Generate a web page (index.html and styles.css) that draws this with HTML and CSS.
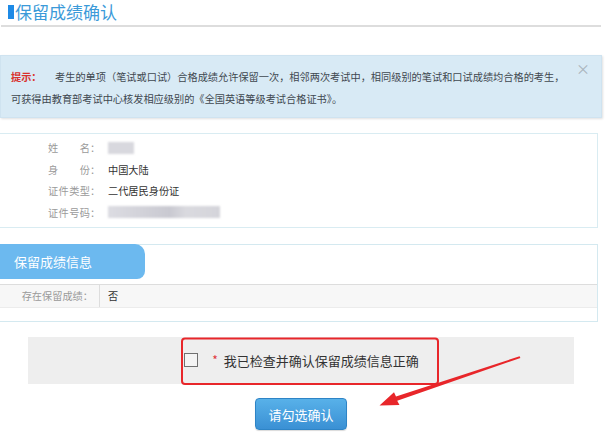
FILE: index.html
```html
<!DOCTYPE html>
<html lang="zh-CN">
<head>
<meta charset="utf-8">
<title>保留成绩确认</title>
<link rel="stylesheet" href="styles.css">
</head>
<body>
<div class="page">
  <div class="header">
    <span class="header-bar"></span>
    <h1 class="header-title">保留成绩确认</h1>
  </div>

  <div class="alert">
    <span class="alert-close">×</span>
    <div class="alert-line"><span class="alert-tag">提示：</span>考生的单项（笔试或口试）合格成绩允许保留一次，相邻两次考试中，相同级别的笔试和口试成绩均合格的考生，</div>
    <div class="alert-line">可获得由教育部考试中心核发相应级别的《全国英语等级考试合格证书》。</div>
  </div>

  <div class="info-box">
    <div class="info-row">
      <span class="info-label"><span class="justify">姓名</span>：</span>
      <span class="blur blur-name"></span>
    </div>
    <div class="info-row">
      <span class="info-label"><span class="justify">身份</span>：</span>
      <span class="info-value">中国大陆</span>
    </div>
    <div class="info-row">
      <span class="info-label"><span class="justify">证件类型</span>：</span>
      <span class="info-value">二代居民身份证</span>
    </div>
    <div class="info-row">
      <span class="info-label"><span class="justify">证件号码</span>：</span>
      <span class="blur blur-id"></span>
    </div>
  </div>

  <div class="score-box">
    <div class="score-tab">保留成绩信息</div>
    <div class="score-row">
      <div class="score-label">存在保留成绩：</div>
      <div class="score-value">否</div>
    </div>
  </div>

  <div class="confirm-bar">
    <label class="confirm-label">
      <span class="checkbox"></span>
      <span class="star">*</span>
      <span class="confirm-text">我已检查并确认保留成绩信息正确</span>
    </label>
  </div>

  <div class="btn-wrap">
    <button class="btn">请勾选确认</button>
  </div>

  <svg class="annotation" width="606" height="440" viewBox="0 0 606 440">
    <rect x="182" y="338.5" width="256" height="45.5" rx="3" ry="3" fill="none" stroke="#e8262a" stroke-width="2"/>
    <polygon points="519.6,356.3 396,396.4 394,392.2 379.5,405.5 399.5,405 397.2,400.8 520.4,357.9" fill="#e8262a"/>
  </svg>
</div>
</body>
</html>
```

FILE: styles.css
```css
* { box-sizing: border-box; }

html, body {
  margin: 0;
  padding: 0;
  background: #ffffff;
}

body {
  font-family: "Noto Sans CJK SC", "Noto Sans", sans-serif;
  color: #333333;
}

.page {
  position: relative;
  width: 606px;
  height: 440px;
  overflow: hidden;
}

/* header */
.header {
  display: flex;
  align-items: center;
  height: 27px;
  width: 600px;
  margin-left: 1px;
  padding-left: 7px;
  padding-bottom: 1px;
  border-bottom: 2px solid #dddddd;
}

.header-bar {
  width: 6px;
  height: 14px;
  background: #1e8ae6;
  margin-right: 1px;
}

.header-title {
  margin: 0;
  font-size: 17px;
  font-weight: normal;
  line-height: 20px;
  color: #3b9ad9;
}

/* alert */
.alert {
  position: relative;
  margin-top: 28px;
  width: 602px;
  height: 63px;
  padding: 10px 10px 0 10px;
  background: #d8eaf5;
  border: 1px solid #cfe3f0;
  box-shadow: 1px 1px 2px rgba(0, 0, 0, 0.12);
  font-size: 10.2px;
  color: #3f4850;
}

.alert-line {
  white-space: nowrap;
  line-height: 21.5px;
}

.alert-tag {
  color: #d9302c;
  font-weight: bold;
  margin-right: 13.5px;
}

.alert-close {
  position: absolute;
  top: 5px;
  right: 11px;
  font-size: 14px;
  line-height: 14px;
  color: #a9b4bb;
}

/* info box */
.info-box {
  margin-top: 15px;
  width: 598px;
  height: 95px;
  padding: 3px 0 0 48px;
  border: 1px solid #d9ecf2;
  border-left: none;
}

.info-row {
  display: flex;
  align-items: center;
  height: 21.5px;
  font-size: 10.2px;
}

.info-label {
  display: flex;
  width: 60px;
  color: #9a9a9a;
}

.justify {
  display: inline-block;
  width: 42px;
  text-align: justify;
  text-align-last: justify;
}

.info-value {
  color: #333333;
}

.blur {
  display: inline-block;
  height: 12px;
  background: #d8d8de;
  filter: blur(1.2px);
}

.blur-name { width: 26px; }
.blur-id {
  width: 112px;
  background: linear-gradient(90deg, #dcdce2 0%, #d2d2d9 30%, #c9c9d1 55%, #dadadf 70%, #d4d4da 100%);
}

/* score box */
.score-box {
  margin-top: 16px;
  width: 598px;
  height: 78px;
  border: 1px solid #d4e9f0;
  border-left: none;
}

.score-tab {
  width: 145px;
  height: 35px;
  margin-top: -1px;
  padding-left: 14px;
  background: #6cb9ef;
  border-radius: 0 10px 8px 0;
  color: #ffffff;
  font-size: 13px;
  line-height: 35px;
}

.score-row {
  display: flex;
  margin-top: 5px;
  height: 24px;
  background: #f7f7f7;
  border-top: 1px solid #dddddd;
  border-bottom: 1px solid #ececec;
  font-size: 10.2px;
  line-height: 22px;
}

.score-label {
  width: 100px;
  padding-right: 6px;
  text-align: right;
  color: #9a9a9a;
  border-right: 1px solid #dddddd;
}

.score-value {
  padding-left: 8px;
  color: #333333;
}

/* confirm */
.confirm-bar {
  display: flex;
  justify-content: center;
  align-items: center;
  margin: 15px 0 0 28px;
  width: 546px;
  height: 47px;
  background: #eeeeee;
}

.confirm-label {
  display: flex;
  align-items: center;
  margin-left: 1px;
  margin-top: -1px;
}

.checkbox {
  width: 14px;
  height: 14px;
  border: 1.5px solid #707070;
  background: #f4f4f4;
}

.star {
  margin-left: 14px;
  color: #e0383b;
  font-size: 12px;
  line-height: 12px;
}

.confirm-text {
  margin-left: 6px;
  font-size: 13px;
  color: #333333;
}

.btn-wrap {
  display: flex;
  justify-content: center;
  width: 602px;
  margin-top: 14px;
}

.btn {
  width: 92px;
  height: 32px;
  padding: 0;
  border: 1px solid #2e84c6;
  border-radius: 4px;
  background: linear-gradient(180deg, #58b1e9 0%, #3a90d4 100%);
  color: #ffffff;
  font-family: "Noto Sans CJK SC", "Noto Sans", sans-serif;
  font-size: 13px;
  box-shadow: 0 1px 1px rgba(0, 0, 0, 0.15);
}

/* annotation overlay */
.annotation {
  position: absolute;
  left: 0;
  top: 0;
  pointer-events: none;
}
```
